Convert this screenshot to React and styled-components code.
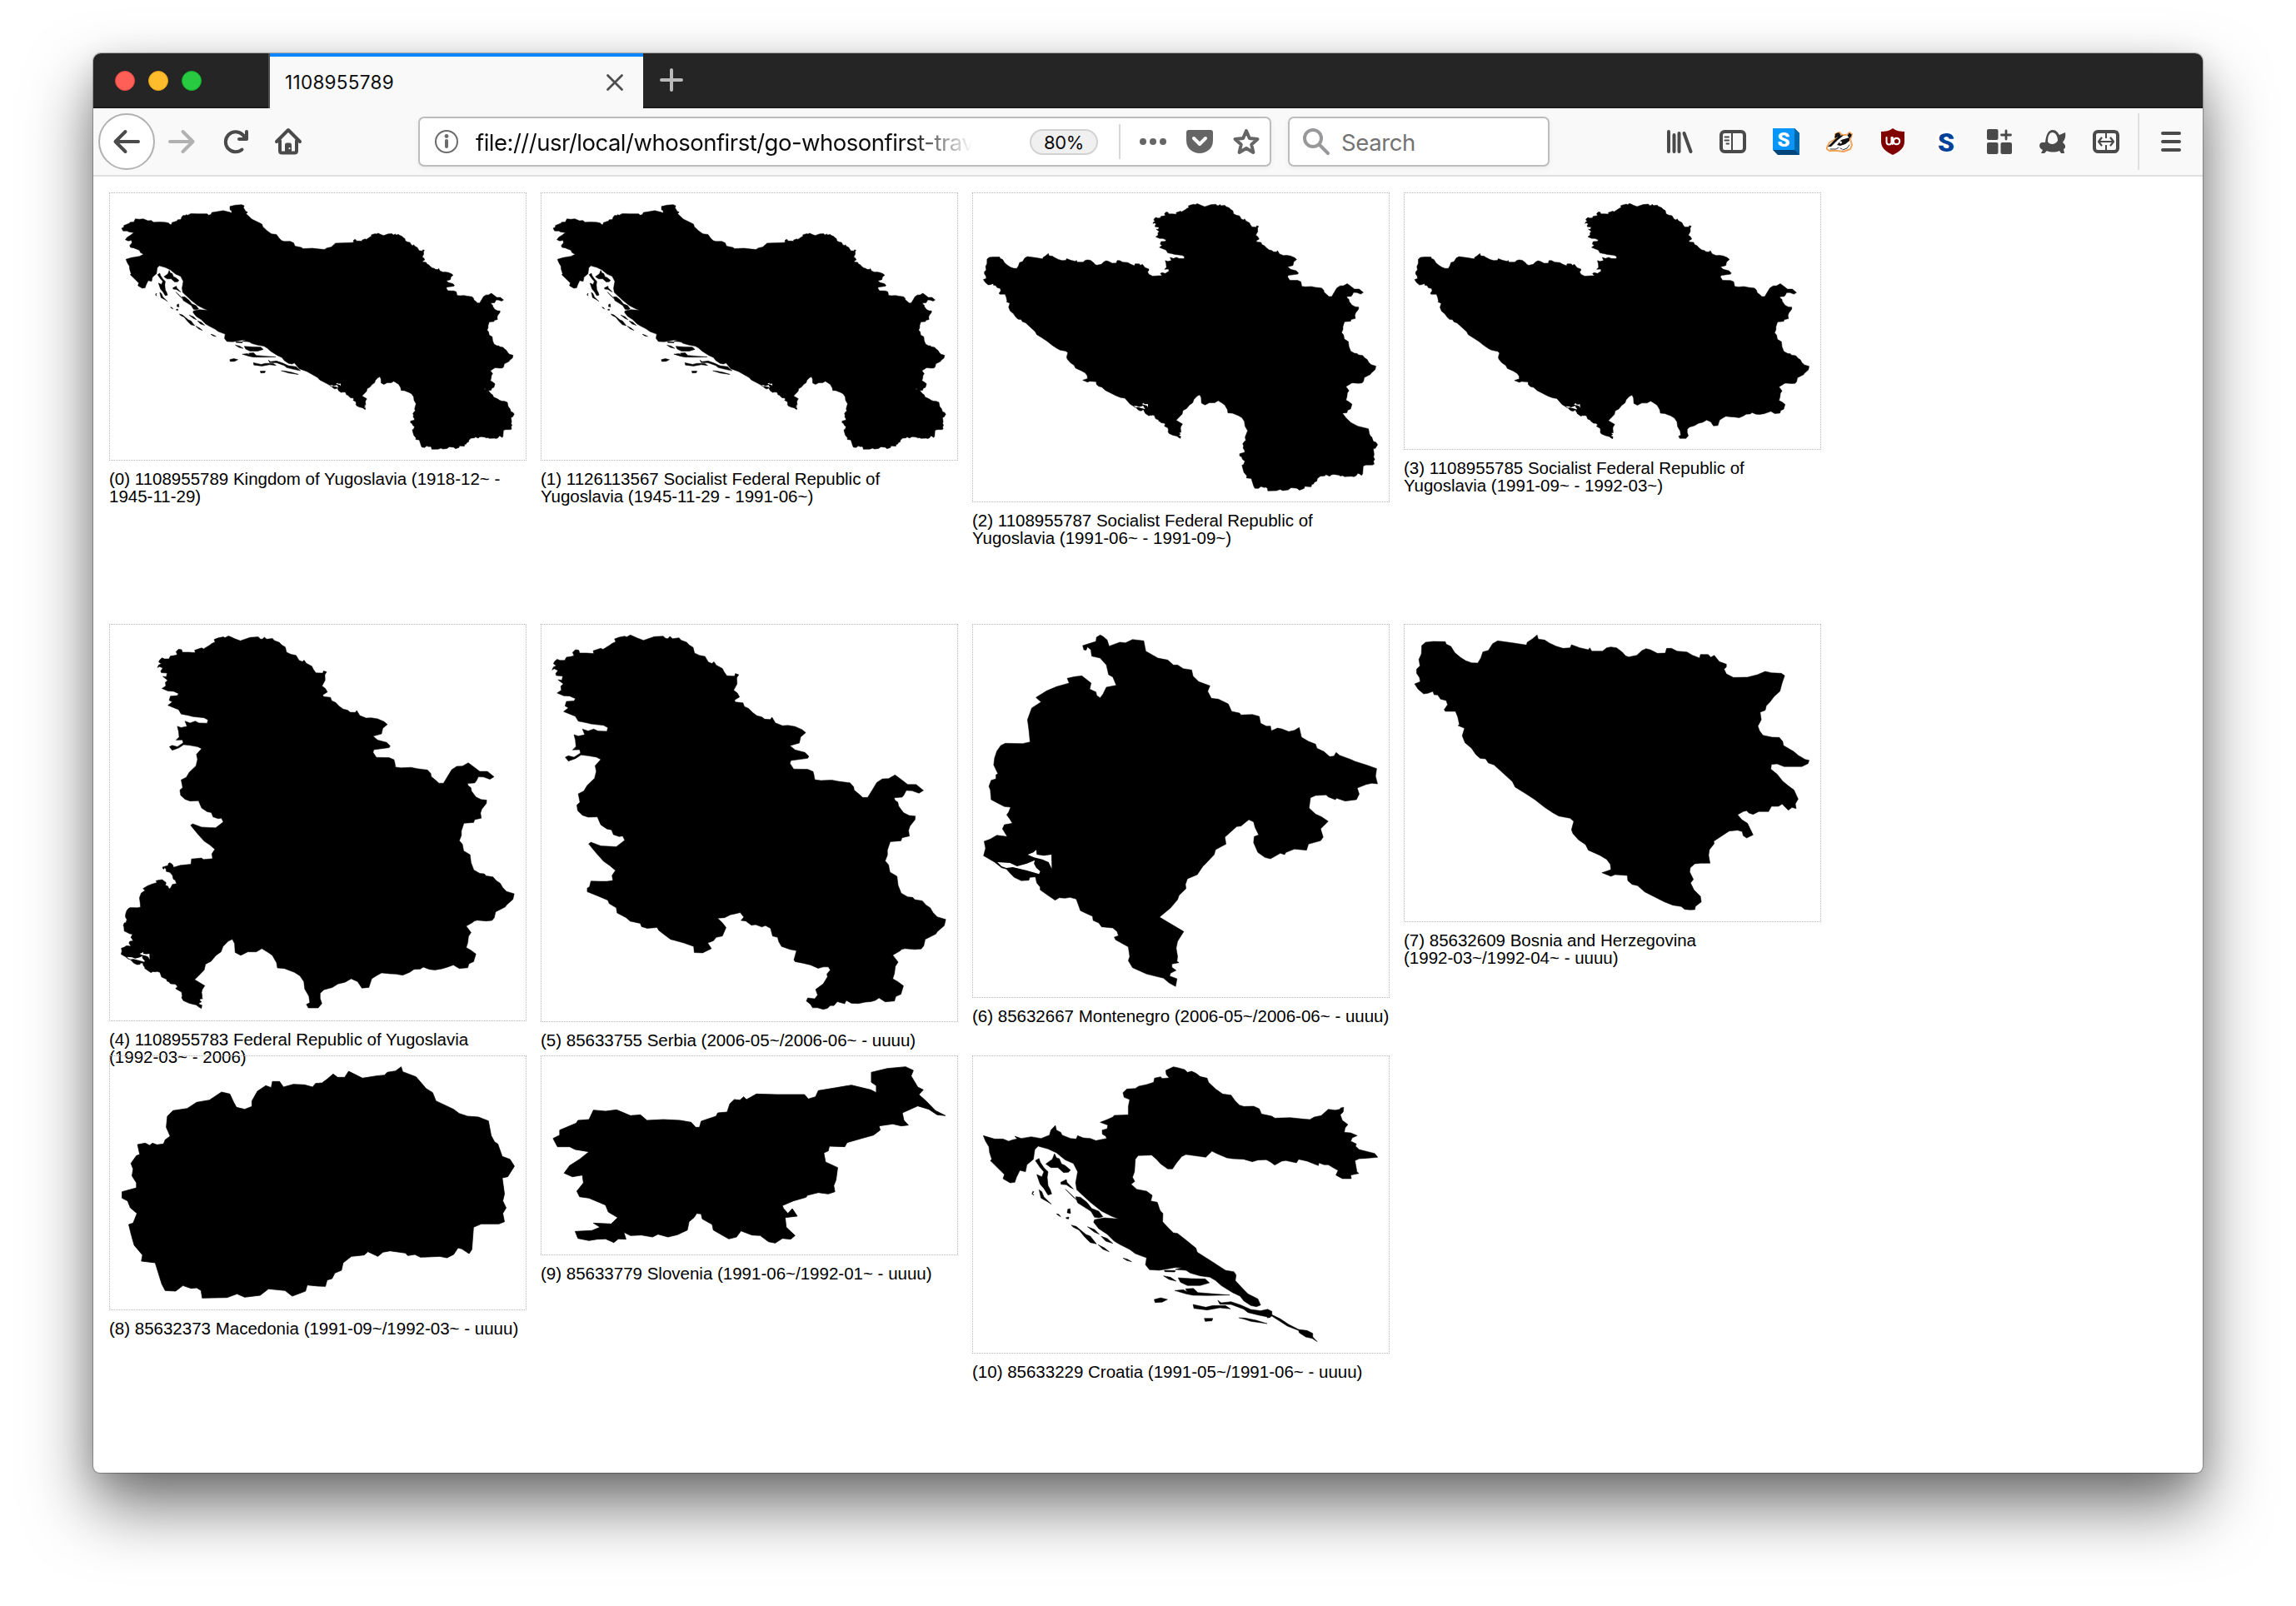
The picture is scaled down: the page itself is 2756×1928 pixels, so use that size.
import React from "react";
import styled, { createGlobalStyle } from "styled-components";

const Global = createGlobalStyle`
  html, body { margin: 0; background: #fff; }
  *, *::before, *::after { box-sizing: border-box; }
`;

const ui = `Inter, Roboto, sans-serif`;

/* ---------- border segments, each in the units of its own survey sheet ---------- */

const pts = (s) => s.trim().split(/\s+/).map((p) => p.split(",").map(Number));
const move = (seg, [sx, ox, sy, oy]) => seg.map(([x, y]) => [x * sx + ox, y * sy + oy]);
const line = (...segs) => "M" + segs.flat().map(([x, y]) => `${x.toFixed(1)} ${y.toFixed(1)}`).join("L") + "Z";

const SRB_NW = pts(`67,190 72,180 82,175 72,168 76,160 85,152 95,156 112,156 118,145 132,143 145,140 140,128 150,118 162,120 165,130`);
const SRB_NE = pts(`190,130 215,132 213,122 240,113 248,117 272,102 280,96 293,90 289,80 305,74 325,70 332,73 345,66 355,70 370,77 392,85 430,72 462,70 470,78 478,79 486,71 495,79 518,76 525,84 545,92 555,102 568,110 573,130 590,138 610,142 622,162 635,167 642,161 650,173 672,185 678,197 688,211 715,212 718,203 730,207 723,218 724,240 712,262 725,272 733,286 715,297 718,304 745,307 750,320 765,327 780,342 795,353 812,357 822,365 842,366 848,358 860,378 885,388 905,387 930,391 955,402 968,413 950,428 945,450 912,459 930,474 965,483 979,497 975,504 915,512 912,522 925,542 975,543 994,551 997,562 1000,580 1022,583 1060,581 1085,586 1125,591 1138,605 1140,617 1158,632 1170,643 1188,643 1205,615 1220,590 1240,577 1262,576 1285,563 1308,580 1330,597 1360,597 1386,618 1370,628 1345,619 1325,618 1316,635 1310,642 1282,644 1285,653 1295,660 1298,674 1315,697 1335,707 1357,709 1356,722 1338,745 1333,760 1336,780 1310,786 1306,797 1268,800 1258,830 1258,848 1250,868 1262,882 1267,908 1292,923 1296,955 1307,983 1330,996 1348,998 1355,1006 1382,1010 1395,1025 1410,1035 1420,1052 1435,1067 1465,1076 1460,1098 1435,1120 1430,1128 1392,1147 1387,1170 1378,1181 1355,1183 1320,1180 1308,1183 1303,1188 1277,1203 1296,1228 1286,1243 1283,1268 1277,1287 1295,1297 1315,1312 1306,1342 1288,1350 1283,1366 1250,1369`);
const SRB_S = pts(`1228,1355 1215,1364 1200,1368 1180,1370 1155,1375 1130,1374 1112,1364 1106,1376 1080,1368 1068,1382 1055,1382 1045,1392 1030,1396 1010,1390 992,1390 985,1378 970,1366 975,1355 1000,1358 1010,1345 1003,1325 1030,1305 1045,1280 1043,1270 1055,1256 1048,1245 1030,1245 1012,1250 985,1238 960,1232 930,1226 926,1220 935,1187 912,1183 882,1172 872,1155 868,1140 850,1135 843,1108 825,1098 812,1103 790,1095 775,1097 755,1082 738,1080 748,1068 735,1052 718,1056 700,1060 680,1070 655,1072 672,1088 685,1105 672,1135 650,1140 640,1152 620,1160 633,1180 602,1195 572,1194 570,1172 535,1160 500,1150 488,1147 465,1130 446,1115 440,1105 405,1108 385,1102 380,1090 345,1083 330,1070 298,1053 295,1035 270,1020 265,1008 230,993 192,978 192,965 200,960 205,940 238,941`);
const SRB_DRINA = pts(`262,941 283,938 280,920 292,902 272,885 250,870 225,842 197,808 205,802 240,815 295,818 325,795 318,780 305,782 285,775 278,758 262,755 240,740 228,712 195,713 175,706 158,690 155,670 166,660 160,630 180,620 192,600 218,575 224,550 220,530 240,508 225,500 195,495 170,492 150,505`);
const SRB_W = pts(`125,514 114,500 125,495 145,500 168,485 165,473 140,474 152,462 150,440 145,420 160,425 183,420 175,400 195,407 215,400 230,407 262,408 265,395 250,387 205,382 190,378 160,372 150,355 108,338 125,325 113,318 118,302 145,300 150,292 130,283 108,282 85,272 100,262 98,248 107,240 88,225 102,226 105,212 82,210 80,203 88,192 75,186`);

const SCG_MKD = pts(`1255,1193 1235,1200 1215,1206 1190,1210 1170,1208 1148,1200 1138,1207 1115,1208 1100,1218 1075,1228 1050,1224 1030,1223 1000,1220 985,1228 965,1240 955,1270 930,1272 915,1250 892,1240 870,1252 845,1258 825,1270 795,1278 782,1290 782,1308 788,1325 775,1340 740,1340 733,1328 745,1322`);
const SCG_ALB = pts(`742,1300 727,1275 724,1250 710,1230 690,1218 655,1205 630,1203 627,1185 612,1160 600,1152 575,1137 555,1148 525,1148 500,1160 480,1150 478,1120 470,1105 455,1112 437,1130 430,1148 412,1160 395,1180 375,1190 370,1210 350,1230`);

const MNE_COAST = pts(`686,1083 772,1135 750,1170 745,1195 750,1225 748,1242 755,1247 730,1252 730,1264 745,1275 725,1285 722,1295 748,1305 743,1333 720,1320 700,1303 640,1288 590,1265 575,1240 580,1225 575,1190 530,1165 525,1155 540,1150 535,1135 520,1122 480,1118 470,1104 450,1095 448,1080 430,1072 405,1060 398,1040 390,1018 368,1012 350,1015 330,1013 315,1022 290,1005 262,985 262,975 250,960 245,938 225,940 222,950 195,952 170,940 155,925 142,910 125,905 100,885 61,862`);
const MNE_W = pts(`68,835 63,810 85,802 108,788 145,793 128,765 135,750 163,745 153,728 143,715 150,705 157,687 135,685 110,672 88,660 85,625 80,612 88,590 105,585 105,570 112,567 97,535 100,510 108,485 122,465 138,457 200,458 226,452 222,410 217,372 232,330 265,308 247,292 285,268 320,253 365,240 358,223 385,217 410,214 443,240 438,262 460,272 463,285 475,293 485,280 497,255 532,248 520,218 505,210 497,175 475,150 445,143 442,120 430,110 425,122 417,120 413,105 460,90 462,75 475,67 485,72 500,85 507,107`);
const MNE_E = pts(`545,93 565,95 590,83 630,88 637,125 680,150 715,157 735,175 750,175 770,188 800,193 805,215 825,235 865,250 857,270 870,295 895,298 930,315 942,342 970,348 975,355 1015,353 1040,360 1045,385 1065,395 1080,395 1083,412 1105,402 1120,405 1145,415 1165,410 1182,400 1190,435 1215,450 1240,460 1245,475 1270,487 1290,505 1305,503 1313,490 1325,500 1365,515 1380,522 1420,535 1457,548 1453,575 1460,603 1440,601 1420,605 1388,618 1395,640 1385,660 1345,665 1315,655 1310,660 1285,650 1278,643 1240,645 1222,653 1217,690 1240,712 1262,722 1285,738 1258,765 1267,795 1258,808 1215,820 1208,842 1165,838 1135,850 1130,858 1115,853 1080,873 1060,868 1035,850 1020,815 1022,793 1038,787 1025,760 1020,740 1003,732 975,755 960,757 918,795 922,820 885,840 880,858 850,890 840,900 820,930 785,945 778,965 780,980 755,1005 750,1020 725,1050`);
const KOTOR = [
  pts(`110,885 155,888 180,900 215,890 243,878 240,890 248,905 262,918 258,928 215,915 165,903 142,906 125,900`),
  pts(`218,858 238,850 248,841 250,858 275,862 302,858 303,908 292,885 270,875 240,868`),
];

const BIH_N = pts(`83,243 103,235 100,220 90,205 90,190 102,178 98,155 107,135 108,105 122,93 150,90 192,91 195,100 212,108 225,130 245,147 265,160 285,167 307,168 318,150 325,128 345,122 360,98 378,88 430,95 480,103 483,93 500,82 518,67 522,82 545,85 560,95 585,107 610,115 635,113 640,102 670,113 700,120 705,113 712,125 750,125 765,113 780,110 800,113 820,128 832,142 843,146 872,140 890,123 905,116 920,120 945,133 973,132 978,115 995,115 1015,125 1050,128 1070,140 1095,150 1098,137 1125,137 1135,147 1147,140 1165,163 1190,172 1190,182 1182,190 1190,207 1215,220`);
const BIH_E = pts(`1265,219 1300,210 1328,198 1350,203 1385,205 1397,213 1388,240 1380,270 1360,288 1345,308 1332,322 1328,338 1310,345 1314,372 1302,395 1308,412 1320,428 1352,435 1378,436 1390,450 1393,465 1430,487 1445,500 1470,515 1484,518 1480,530 1458,541 1395,541 1370,531 1350,533 1348,550 1370,568 1390,593 1410,610 1430,625 1445,658 1435,675 1438,692 1423,688 1410,698 1388,676 1375,684 1350,684 1340,703 1305,703 1285,713 1270,708 1262,700 1250,703 1230,714 1245,732 1265,745 1285,787 1262,798 1250,790 1246,775 1230,770 1200,773 1145,810 1147,818 1130,840 1127,860 1132,889 1100,889 1078,891 1062,905 1060,920 1073,947 1063,960 1075,985 1098,1008 1101,1028 1080,1045 1078,1056 1062,1057 1042,1055`);
const BIH_SW = pts(`1030,1045 1000,1040 970,1028 900,992 875,970 855,965 840,952 838,933 795,930 780,936 748,923 780,912 778,893 765,875 740,860 700,842 690,822 665,805 645,782 640,768 648,738 635,727 595,719 575,708 545,688 510,660 475,637 440,615 430,595 365,535 345,528 335,513 315,511 300,497 285,475 262,455 252,430 260,403 237,393 242,390 236,362 228,342 192,342 188,335 200,318 195,303 175,298 165,283 152,282 148,270 130,277 115,279 95,262`);

const MKD_W = pts(`40,512 66,498 66,480 58,455 60,430 56,410 66,382 72,378 68,342`);
const MKD_N = pts(`82,337 90,345 95,337 103,343 115,340 118,325 127,312 120,280 122,240 132,220 158,212 175,190 198,182 220,153 235,160 242,190 247,208 262,215 275,205 275,185 285,150 300,130 310,137 312,115 325,115 332,135 350,125 370,127 385,135 390,122 402,120 412,105 422,88 430,100 443,100 450,78 475,103 500,95 515,92 520,82 535,77`);
const MKD_SE = pts(`545,62 548,80 572,98 590,140 602,155 608,185 640,215 650,230 665,240 685,243 703,257 708,310 714,332 720,340 728,385 742,395 750,420 738,458 728,462 732,520 729,545 735,570 729,590 732,620 722,628 690,628 676,640 673,720 668,735 655,718 648,714 640,738 628,750 615,745 580,748 570,738 557,742 553,733 525,725 512,730 503,745 485,728 478,740 455,745 440,768 437,795 425,805 420,825 411,830 408,853 395,852 375,848 372,870 348,888 335,868 305,862 290,885 262,892 248,880 230,893 185,895 183,868 175,858 165,860 150,850 137,870 118,868 112,845 108,820 100,768 75,762 77,740 62,705 57,670 52,630 60,625 67,590 55,570 50,545 40,535`);

const SVN_N = pts(`820,320 832,308 832,290 862,265 865,255 885,252 893,218 915,222 935,217 960,238 978,235 990,255 1020,252 1050,255 1070,262 1078,280 1085,280 1088,258 1115,240 1118,228 1135,225 1140,195 1148,180 1158,182 1165,170 1170,180 1188,160 1225,162 1275,162 1282,178 1295,170 1300,148 1330,138 1360,128 1395,145 1405,155 1405,130 1396,118 1396,82 1425,68 1458,62 1472,75 1468,95 1480,135 1490,145 1482,162 1495,185 1512,220 1530,238`);
const SVN_SE = pts(`1515,235 1500,215 1480,203 1452,228 1455,255 1463,272 1450,275 1435,268 1410,275 1412,290 1400,308 1375,322 1352,335 1348,350 1320,348 1318,365 1310,372 1313,405 1335,425 1332,470 1328,490 1330,512 1318,520 1300,515 1280,525 1278,532 1255,545 1235,562 1237,572 1245,590 1253,573 1262,600 1240,605 1242,640 1258,670 1250,683 1235,680 1222,697 1210,692 1195,670 1180,668 1160,653 1152,675 1138,682 1110,650 1108,630 1090,610 1088,592 1080,590 1075,605 1066,620 1063,650 1045,667 1028,675 1010,665 1000,675 980,668 960,670 948,658 952,683 938,682 930,695 915,682 900,683 885,688 865,680 860,655 890,652 905,640 893,625 925,628`);
const SVN_W = pts(`937,605 920,585 915,560 885,535 868,530 863,510 875,480 873,452 855,458 840,445 850,418 868,395 885,368 860,360 850,350 828,350`);

const HRV_NW = pts(`60,310 100,322 130,322 150,330 165,325 180,322 172,312 195,320 230,314 265,320 295,308 300,290 316,273 320,290 335,298 340,308 370,320 390,322 395,310 415,318 440,320 460,328 498,320 495,312 483,305 482,290 500,285 502,272 475,262 500,252 520,243 525,237 575,235 575,205 580,180 560,172 556,155 570,142 600,140 612,132 640,126 665,118 668,103 690,98 695,104 720,102 710,90 708,75 735,62 750,65 775,72 785,82 800,78 815,85 830,97`);
const HRV_HUN = pts(`855,103 860,118 885,142 910,160 940,164 955,185 970,200 985,205 1020,204 1040,213 1048,232 1085,240 1095,247 1150,245 1195,250 1220,252 1235,243 1260,238 1285,215`);
const HRV_IN = pts(`1310,218 1325,215 1330,210 1340,208 1338,225 1328,235 1335,255 1355,270 1345,282 1342,298 1365,300 1388,310 1370,318 1365,330 1385,340 1382,348 1395,360 1450,374 1461,388 1415,392 1395,393 1380,400 1387,440 1394,446 1365,452 1367,465 1335,465 1312,452 1320,435 1310,430 1285,415 1270,415 1252,408 1250,418 1210,402 1180,395 1172,408 1135,400 1120,402 1095,416 1080,405 1065,397 1035,398 1015,404 985,395 945,393 925,390 890,375 872,366 850,388 830,385 780,378 765,385 745,410 732,430 715,430 690,412 675,395 658,380 610,382 600,395 597,440 590,460 598,475 585,485 605,503 640,510 660,525 655,545 678,550 688,580 698,590 697,620 715,640 735,660 750,662 785,690 815,715 820,730 870,762 920,795 950,800 958,812 955,832 985,865 1000,880 1035,898`);
const HRV_COAST = pts(`1045,920 1030,926 1010,922 985,905 972,888 945,875 905,850 885,832 865,820 830,815 795,805 765,785 740,785 715,790 685,795 650,793 636,775 640,750 600,735 580,720 545,702 525,690 500,665 470,645 452,622 455,613 490,606 540,610 515,600 480,582 440,550 410,522 392,505 388,480 395,440 380,410 350,397 320,372 290,358 255,348 243,360 238,395 215,415 210,440 190,435 178,460 172,478 155,480 130,465 135,450 100,415 85,400 90,395 82,370 80,350 68,330`);

const HRV_ISLES = [
  `1048,940 1070,935 1085,943 1085,955 1115,970 1145,990 1180,1008 1210,1012 1230,1022 1230,1035 1246,1052 1228,1040 1205,1035 1182,1020 1180,1012 1140,996 1085,960 1070,967 1060,948`,
  `305,395 313,375 320,390 330,393 338,412 350,417 370,434 362,442 345,443 325,425 300,425 282,412`,
  `245,400 258,392 262,405 275,425 290,440 287,460 290,490 298,505 303,520 290,524 275,500 262,485 250,450 268,458 275,440 262,425`,
  `258,505 268,512 275,530 302,557 288,548 265,535`,
  `240,512 235,518 240,525 233,520 236,511`,
  `335,478 355,468 357,478 380,502 370,497 355,487 336,485`,
  `352,503 372,522 392,542 378,530`,
  `388,530 405,532 428,550 445,572 470,582 485,602 470,606 455,604 442,582 415,565 395,552`,
  `360,575 368,573 370,590 358,588`, `354,605 364,603 363,610 355,609`, `320,592 328,593 335,602 326,597`,
  `372,632 390,637 415,658 425,666 440,672 462,700 440,695 420,675 400,650 380,640`,
  `430,638 455,648 472,665 455,658`, `478,672 500,680 520,698 495,690`, `468,703 490,714 507,728 485,719`,
  `556,751 572,755 587,764 570,760`, `700,815 725,820 745,834 720,828`, `703,795 742,796 740,801 705,800`, `742,792 765,785 780,795`,
  `752,822 800,825 848,826 863,840 830,850 785,850 760,838`,
  `740,868 770,865 785,872 778,862 806,860 822,875 880,880 935,884 860,886 805,885 780,880`,
  `667,900 690,894 714,900 695,910 670,911`,
  `805,918 850,928 875,922 920,922 938,934 900,930 855,938 808,932`,
  `893,903 905,912 940,908 975,920 1010,936 1055,942 1080,965 1040,957 1000,947 985,935 940,918 900,917`,
  `845,968 875,968 872,977 848,979`, `968,966 990,967 1030,975 1068,987 1010,979 990,972`,
].map(pts);

/* ---------- silhouettes assembled from the shared borders ---------- */

const ID = [1, 0, 1, 0];
const k = 1568 / 530;

const yuArea = (f) => {
  const isles = HRV_ISLES.slice(1).map((s) => line(move(s, f.hrv)));
  return (
    line(
      move(SVN_N, f.svn), move(HRV_HUN, f.hrv), move(SRB_NW.slice(-6), f.srb), move(SRB_NE, f.srb),
      move(MKD_SE, f.mkd), move(MKD_W, f.mkd), move(SCG_ALB, f.scg), move(MNE_COAST, f.mne),
      pts("780,708 773,700 735,678 708,668"), move(HRV_COAST, f.hrv), move(HRV_NW.slice(0, 1), f.hrv),
      pts("112,268 140,263"), move(SVN_W, f.svn)
    ) + isles.join("")
  );
};
const YU = yuArea({
  svn: [0.668, -471, 0.33, 56.4],
  hrv: [0.6075, 55.8, 0.6123, 84.1],
  srb: [0.4284, 839.4, 0.4351, 151.3],
  mkd: [0.5183, 1082.3, 0.2653, 720.6],
  scg: [0.4727, 771.7, 0.498, 146.8],
  mne: [0.1976, 795.1, 0.1962, 553.5],
});

const rump = [
  move(BIH_N, [0.5333, 38.7, 0.534, 217.2]),
  pts("712,333"),
  ...[SRB_W, SRB_NW, SRB_NE].map((s) => move(s, [0.5694, 649.8, 0.5806, 34.7])),
];
const rumpSouth = [
  move(SCG_ALB, [0.6283, 559.8, 0.6645, 28.7]),
  move(MNE_COAST, [0.2626, 590.9, 0.2618, 571.3]),
  move(BIH_SW, [0.5333, 38.7, 0.534, 217.2]),
];
const WIDE = [0.995, 7.4, 0.998, 0.5];
const rumpHole = (t) => KOTOR.map((h) => line(move(move(h, [0.2626, 590.9, 0.2618, 571.3]), t))).join("");

const SHAPES = {
  yu: { d: YU, hole: KOTOR.map((h) => line(move(h, [0.1976, 795.1, 0.1962, 553.5]))).join("") },
  sfr91: {
    d: line(
      ...rump.map((s) => move(s, WIDE)), pts("1363,826 1378,845 1395,862 1420,875 1457,884"),
      move(MKD_SE.slice(10), [0.69, 972.4, 0.3495, 795]), move(MKD_W, [0.69, 972.4, 0.3495, 795]),
      ...rumpSouth.map((s) => move(s, WIDE))
    ),
    hole: rumpHole(WIDE),
  },
  sfr92: { d: line(...rump, move(SCG_MKD, [0.6283, 559.8, 0.6645, 28.7]), ...rumpSouth), hole: rumpHole(ID) },
  fry: {
    d: line(
      ...[SRB_DRINA.slice(1), SRB_W, SRB_NW, SRB_NE].map((s) => move(s, [0.9063, 143.3, 0.8737, 9])),
      SCG_MKD, SCG_ALB, move(MNE_COAST, [0.418, 49.5, 0.394, 816.6]), move(MNE_W, [0.418, 49.5, 0.394, 816.6]),
      pts("285,852 323,848 325,830 360,827 368,832 400,829")
    ),
    hole: KOTOR.map((h) => line(move(h, [0.418, 49.5, 0.394, 816.6]))).join(""),
  },
  serbia: { d: line(SRB_NW, SRB_NE, SRB_S, SRB_DRINA, SRB_W) },
  montenegro: { d: line(MNE_COAST, MNE_W, MNE_E), hole: KOTOR.map((h) => line(h)).join("") },
  bosnia: { d: line(BIH_N, BIH_E, BIH_SW) },
  macedonia: { d: line(MKD_W, MKD_N, MKD_SE) },
  slovenia: { d: line(SVN_N, SVN_SE, SVN_W) },
  croatia: { d: line(HRV_NW, HRV_HUN, HRV_IN, HRV_COAST) + HRV_ISLES.map((s) => line(s)).join("") },
};

/* left/top: the inner corner of the frame on the sheet; sx/sy: sheet units per pixel */
const PLACES = [
  { shape: "yu", h: 322, left: 12, top: 12, sx: k, sy: 3, text: ["(0) 1108955789 Kingdom of Yugoslavia (1918-12~ -", "1945-11-29)"] },
  { shape: "yu", h: 322, left: 12, top: 12, sx: k, sy: 3, text: ["(1) 1126113567 Socialist Federal Republic of", "Yugoslavia (1945-11-29 - 1991-06~)"] },
  { shape: "sfr91", h: 372, left: 18, top: 12, sx: k, sy: 3, text: ["(2) 1108955787 Socialist Federal Republic of", "Yugoslavia (1991-06~ - 1991-09~)"] },
  { shape: "sfr92", h: 309, left: 16, top: 12, sx: k, sy: 3, text: ["(3) 1108955785 Socialist Federal Republic of", "Yugoslavia (1991-09~ - 1992-03~)"] },
  { shape: "fry", h: 477, left: 12, top: 10, sx: k, sy: 1568 / 550, text: ["(4) 1108955783 Federal Republic of Yugoslavia", "(1992-03~ - 2006)"] },
  { shape: "serbia", h: 478, left: 10, top: 10, sx: k, sy: k, text: ["(5) 85633755 Serbia (2006-05~/2006-06~ - uuuu)"] },
  { shape: "montenegro", h: 449, left: 8, top: 10, sx: k, sy: 3, text: ["(6) 85632667 Montenegro (2006-05~/2006-06~ - uuuu)"] },
  { shape: "bosnia", h: 358, left: 16, top: 10, sx: k, sy: 3, text: ["(7) 85632609 Bosnia and Herzegovina", "(1992-03~/1992-04~ - uuuu)"] },
  { shape: "macedonia", h: 306, left: 12, top: 8, sx: 1568 / 1040, sy: 3, text: ["(8) 85632373 Macedonia (1991-09~/1992-03~ - uuuu)"] },
  { shape: "slovenia", h: 240, left: 530, top: 8, sx: 1568 / 1040, sy: 3, text: ["(9) 85633779 Slovenia (1991-06~/1992-01~ - uuuu)"] },
  { shape: "croatia", h: 358, left: 8, top: 8, sx: k, sy: 3, text: ["(10) 85633229 Croatia (1991-05~/1991-06~ - uuuu)"] },
];

/* ---------- window ---------- */

const Desktop = styled.div`
  width: 2756px;
  height: 1928px;
  padding: 64px 112px 160px;
  background: #fff;
  overflow: hidden;
`;
const Window = styled.div`
  display: flex;
  flex-direction: column;
  height: 1704px;
  border-radius: 9px 9px 8px 8px;
  background: #fff;
  overflow: hidden;
  box-shadow: 0 0 1px 1px rgba(0, 0, 0, 0.28), 0 40px 80px rgba(0, 0, 0, 0.55), 0 10px 36px rgba(0, 0, 0, 0.12);
`;
const TabStrip = styled.div`
  display: flex;
  flex: none;
  height: 66px;
  background: #252525;
  box-shadow: inset 0 -2px 0 #1b1b1b;
`;
const Lights = styled.div`
  display: flex;
  align-items: center;
  gap: 16px;
  width: 212px;
  padding-left: 26px;
  border-right: 2px solid #4d4d4d;
`;
const Light = styled.span`
  width: 24px;
  height: 24px;
  border-radius: 50%;
  background: ${(p) => p.$fill};
  border: 1px solid ${(p) => p.$edge};
`;
const Tab = styled.div`
  display: flex;
  align-items: center;
  justify-content: space-between;
  width: 448px;
  padding: 0 22px 0 18px;
  border-top: 4px solid #0a84ff;
  background: #f9f9fa;
  color: #0c0c0d;
  font: 22.5px/30px ${ui};
  letter-spacing: 0.3px;
`;
const NewTab = styled.div`
  display: flex;
  align-items: center;
  padding: 0 0 2px 20px;
`;
const Toolbar = styled.div`
  display: flex;
  flex: none;
  align-items: center;
  height: 82px;
  padding: 0 24px 0 6px;
  background: #f9f9fa;
  border-bottom: 2px solid #e0e0e1;
`;
const BackButton = styled.div`
  display: grid;
  flex: none;
  place-items: center;
  width: 68px;
  height: 68px;
  border: 2px solid #b1b1b3;
  border-radius: 50%;
  background: #fff;
`;
const NavIcons = styled.div`
  display: flex;
  flex: none;
  gap: 32px;
  padding-left: 16px;
  width: 316px;
`;
const Field = styled.div`
  display: flex;
  flex: none;
  align-items: center;
  width: ${(p) => p.$w}px;
  height: 60px;
  margin-right: ${(p) => p.$after}px;
  border: 2px solid #bdbdbe;
  border-radius: 7px;
  background: #fff;
  box-shadow: 0 2px 6px rgba(0, 0, 0, 0.06);
  font: 27.5px/36px ${ui};
`;
const Address = styled.div`
  width: 598px;
  margin-left: 3px;
  padding-top: 2px;
  white-space: nowrap;
  color: #0c0c0d;
  letter-spacing: -0.5px;
  mask-image: linear-gradient(90deg, #000 520px, transparent 596px);
`;
const ZoomPill = styled.div`
  width: 82px;
  height: 31px;
  margin-left: 67px;
  border: 2px solid #d2d2d3;
  border-radius: 16px;
  background: #f0f0f1;
  color: #0c0c0d;
  text-align: center;
  font: 22px/28px ${ui};
  letter-spacing: -0.4px;
`;
const FieldRule = styled.span`
  width: 2px;
  height: 42px;
  margin: 0 23px 0 25px;
  background: #d7d7db;
`;
const FieldIcons = styled.div`
  display: flex;
  align-items: center;
  gap: 24px;
`;
const Placeholder = styled.span`
  margin-left: 14px;
  padding-top: 2px;
  color: #737373;
  letter-spacing: -0.4px;
`;
const Extensions = styled.div`
  display: flex;
  gap: 32px;
  margin-left: auto;
  padding-right: 22px;
`;
const MenuArea = styled.div`
  display: flex;
  align-items: center;
  height: 68px;
  padding-left: 24px;
  border-left: 2px solid #e0e0e1;
`;
const Glyph = styled.svg`
  display: block;
  flex: none;
  overflow: visible;
`;

const Page = styled.main`
  display: grid;
  grid-template-columns: repeat(4, 501px);
  grid-auto-rows: 518px;
  column-gap: 17px;
  padding: 19px;
`;
const Place = styled.figure`
  margin: 0;
`;
const Frame = styled.div`
  width: 501px;
  height: ${(p) => p.$h}px;
  border: 1px dotted #b4b4b4;
`;
const Map = styled.svg`
  display: block;
  width: 100%;
  height: 100%;
`;
const Caption = styled.figcaption`
  margin-top: 11px;
  color: #000;
  font: 20.5px/21px "Liberation Sans", Arial, sans-serif;
  white-space: nowrap;
`;
const CaptionLine = styled.div`
  height: 21px;
`;

const Icon = ({ size = 32, children, color = "#4a4a4b" }) => (
  <Glyph width={size} height={size} viewBox={`0 0 ${size} ${size}`} fill="none" stroke={color} strokeWidth="4" strokeLinecap="round" strokeLinejoin="round">
    {children}
  </Glyph>
);

function ExtensionIcons() {
  return (
    <Extensions>
      <Icon><path d="M3 4V28M9.500 8V28M15.500 6V28M21.500 6L29.500 28" /></Icon>
      <Icon>
        <rect x="2" y="4" width="28" height="24" rx="4" />
        <path d="M15 4V28M6.500 10.500H11M6.500 14.500H11M8.500 18.500H11" strokeWidth="2" />
      </Icon>
      <Icon>
        <g stroke="none">
          <path d="M0 0H26L32 6V32H6L0 26Z" fill="#00457c" />
          <path d="M26 0L32 6V32L26 26Z" fill="#0068ad" />
          <path d="M0 0H26V26H0Z" fill="#0996f8" />
          <text x="13" y="21.500" textAnchor="middle" fontFamily="Roboto, sans-serif" fontWeight="900" fontSize="24" fill="#fff">S</text>
        </g>
      </Icon>
      <Icon>
        <g strokeWidth="1.500">
          <path d="M1 23L4 17L11 13L11 7L16 5L19 8H25L28 5L31 7L29 13L31 20L29 25L21 28L13 27H4L1 25Z" fill="#fff" stroke="#f2a45a" strokeWidth="2" />
          <path d="M2 22L9 15L16 8.500H21L14 14L6 22Z" fill="#111" stroke="none" />
          <path d="M11 11L12 7L15 6L16.500 8ZM26.500 9L28 6.500L30 8L28.500 11Z" fill="#222" stroke="#111" />
          <path d="M13 20L18 14L28 11L28 15L23 19L17 21Z" fill="#111" stroke="none" />
          <circle cx="17.500" cy="17" r="1.400" fill="#fff" stroke="none" />
          <path d="M5 25H12L15 23M20 26L25 24L28 20M17 24L19 25" stroke="#333" strokeWidth="1" />
        </g>
      </Icon>
      <Icon>
        <path d="M16 0C12 3 7 4 2 4V16C2 24 8 28 16 32C24 28 30 24 30 16V4C25 4 20 3 16 0Z" fill="#800000" stroke="none" />
        <path d="M8.500 11V16.500Q8.500 19.500 11.500 19.500T14.500 16.500V11M15.800 11V19" stroke="#fff" strokeWidth="2" />
        <circle cx="20.500" cy="15.500" r="3.700" stroke="#fff" strokeWidth="2.200" />
      </Icon>
      <Icon>
        <circle cx="16" cy="16" r="13.500" fill="#fff" stroke="none" />
        <text x="16" y="27.500" textAnchor="middle" fontFamily="Roboto, sans-serif" fontWeight="900" fontSize="32" fill="#00429a" stroke="none">S</text>
      </Icon>
      <Icon>
        <g fill="#4a4a4b" stroke="none">
          <rect x="1" y="1" width="13.500" height="13" rx="2" />
          <rect x="1" y="17" width="13.500" height="14" rx="2" />
          <rect x="17.500" y="17" width="13.500" height="14" rx="2" />
        </g>
        <path d="M24 3V13M18.500 8H29.500" strokeWidth="2.800" />
      </Icon>
      <Icon>
        <path fill="#4a4a4b" stroke="none" d="M7 17C8 7 11 2 16 2C20 2 22 5 24 8L31 5C32 11 30 14 28 17C32 20 32 24 29 25L30 30H26L24 27C20 29 13 29 9 27L6 30H2L4 26C-1 24-1 18 3 17Z" />
        <path fill="#f9f9fa" stroke="none" d="M10 16C10 9 12 5 15.500 5C19 5 22 9 22 15C19 20 12 20 10 16Z" />
      </Icon>
      <Icon>
        <rect x="2" y="4" width="28" height="24" rx="4" />
        <path d="M16 6V12M16 20V26" strokeWidth="2" strokeLinecap="butt" />
        <path d="M7 16H25M10.500 11.500L7 16L10.500 20.500M21.500 11.500L25 16L21.500 20.500" strokeWidth="2.200" />
      </Icon>
    </Extensions>
  );
}

export default function App() {
  return (
    <>
      <Global />
      <Desktop>
        <Window>
          <TabStrip>
            <Lights>
              <Light $fill="#ff5f57" $edge="#e2463f" />
              <Light $fill="#ffbd2e" $edge="#e1a116" />
              <Light $fill="#28ca42" $edge="#13ac29" />
            </Lights>
            <Tab>
              <span>1108955789</span>
              <Icon size={24} color="#4e4e50">
                <path d="M3.500 3.500L20.500 20.500M20.500 3.500L3.500 20.500" strokeWidth="2.800" />
              </Icon>
            </Tab>
            <NewTab>
              <Icon size={28} color="#b9b9ba"><path d="M14 2V26M2 14H26" /></Icon>
            </NewTab>
          </TabStrip>
          <Toolbar>
            <BackButton>
              <Icon><path d="M30 16H3M14.500 4L2.500 16L14.500 28" /></Icon>
            </BackButton>
            <NavIcons>
              <Icon color="#b1b1b2"><path d="M2 16H29M17.500 4L29.500 16L17.500 28" /></Icon>
              <Icon>
                <path d="M24.500 25.500A12 12 0 1 1 25 7.500L29 11.500" />
                <path d="M30 4V13H21" />
              </Icon>
              <Icon>
                <path d="M2 16L16 2L30 16M6 15V27Q6 29.500 8.500 29.500H23.500Q26 29.500 26 27V15" />
                <path d="M12.500 29V19.500Q12.500 18 14 18H18Q19.500 18 19.500 19.500V29Z" fill="#4a4a4b" strokeWidth="1" />
                <path d="M17.500 24V24.200" stroke="#f9f9fa" strokeWidth="2" />
              </Icon>
            </NavIcons>
            <Field $w={1024} $after={20}>
              <Icon size={64} color="#6b6b6c">
                <circle cx="32" cy="32" r="13" strokeWidth="2" />
                <path d="M32 31V38" />
                <circle cx="32" cy="25.500" r="2.400" fill="#6b6b6c" stroke="none" />
              </Icon>
              <Address>file:///usr/local/whosonfirst/go-whosonfirst-trav</Address>
              <ZoomPill>80%</ZoomPill>
              <FieldRule />
              <FieldIcons>
                <Icon color="#656566">
                  <g fill="#656566" stroke="none"><circle cx="4" cy="16" r="4" /><circle cx="16" cy="16" r="4" /><circle cx="28" cy="16" r="4" /></g>
                </Icon>
                <Icon color="#656566">
                  <path d="M3 2H29Q32 2 32 5V14Q32 22 27 26T16 30T5 26T0 14V5Q0 2 3 2Z" fill="#656566" stroke="none" />
                  <path d="M9 12L16 19L23 12" stroke="#fff" />
                </Icon>
                <Icon color="#656566">
                  <path d="M16 3L19.800 12L29.500 12.900L22.200 19.400L24.400 29L16 24L7.600 29L9.800 19.400L2.500 12.900L12.200 12Z" />
                </Icon>
              </FieldIcons>
            </Field>
            <Field $w={314} $after={0}>
              <Icon size={16} />
              <Icon color="#98989a">
                <circle cx="12" cy="12" r="10" />
                <path d="M19.500 19.500L30 30" />
              </Icon>
              <Placeholder>Search</Placeholder>
            </Field>
            <ExtensionIcons />
            <MenuArea>
              <Icon size={28}><path d="M4 4H24M4 14H24M4 24H24" /></Icon>
            </MenuArea>
          </Toolbar>
          <Page>
            {PLACES.map((p) => (
              <Place key={p.text[0]}>
                <Frame $h={p.h}>
                  <Map preserveAspectRatio="none" viewBox={`${p.left * p.sx} ${p.top * p.sy} ${499 * p.sx} ${(p.h - 2) * p.sy}`}>
                    <path d={SHAPES[p.shape].d} stroke="#000" strokeWidth="1.500" strokeLinejoin="round" />
                    {SHAPES[p.shape].hole && <path d={SHAPES[p.shape].hole} fill="#fff" />}
                  </Map>
                </Frame>
                <Caption>
                  {p.text.map((t) => <CaptionLine key={t}>{t}</CaptionLine>)}
                </Caption>
              </Place>
            ))}
          </Page>
        </Window>
      </Desktop>
    </>
  );
}
